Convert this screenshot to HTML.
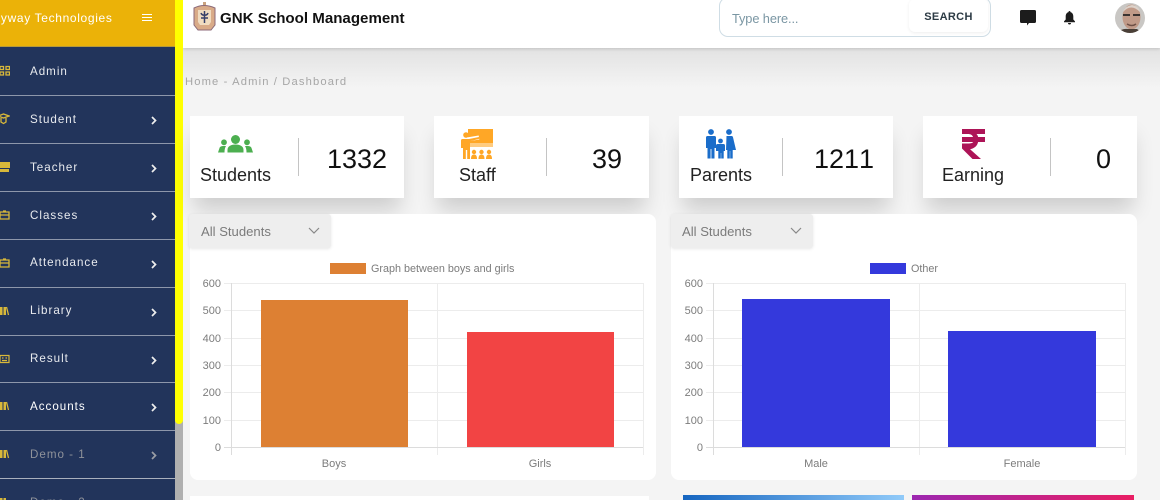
<!DOCTYPE html>
<html><head><meta charset="utf-8"><style>
*{box-sizing:border-box}
html,body{margin:0;padding:0;width:1160px;height:500px;overflow:hidden;background:#f4f4f4;font-family:"Liberation Sans",sans-serif}
.a{position:absolute}
#side{left:0;top:0;width:175px;height:500px;background:#22345b;overflow:hidden}
#top{left:0;top:0;width:175px;height:47px;background:#ebb208;border-bottom:1px solid #b69a3a}
.it{position:absolute;left:0;width:175px;height:48px;border-bottom:1px solid #8e97ab;color:#e8eaee;font-size:11.600px;letter-spacing:1px;overflow:hidden}
.it span{position:absolute;left:30px;top:17px;line-height:13px}
.it svg.c{position:absolute;left:151px;top:20px}
.it svg.i{position:absolute;left:-2px;top:17px}
.card{position:absolute;top:116px;height:82px;background:#fff;box-shadow:0 16px 20px -4px rgba(0,0,0,.16)}
.lab{position:absolute;font-size:18px;color:#222;line-height:22px;top:48px;white-space:nowrap}
.num{position:absolute;font-size:27px;color:#111;line-height:32px;top:27px;white-space:nowrap;font-kerning:none}
.dv{position:absolute;top:22px;width:1px;height:38px;background:#c4c4c4}
.pan{position:absolute;top:214px;width:466px;height:266px;background:#fff;border-radius:8px}
.dd{position:absolute;top:214px;width:142px;height:34px;background:#eee;border-radius:3px;box-shadow:0 1px 3px rgba(0,0,0,.1);color:#7b7b7b;font-size:13.100px;line-height:35px;padding-left:12px}
.dd svg{position:absolute;left:119px;top:13px}
</style></head><body>
<div class="a" style="left:183px;top:48px;width:977px;height:40px;background:linear-gradient(#e2e2e2,#f4f4f4)"></div>
<div class="a" style="left:183px;top:0;width:977px;height:48px;background:#fff;box-shadow:0 1px 3px rgba(0,0,0,.15)"></div>

<div id="side" class="a">
<div id="top" class="a"><div class="a" style="right:62.500px;top:11px;color:#fff;font-size:12px;letter-spacing:.65px;white-space:nowrap;line-height:14px">Skyway Technologies</div>
<svg class="a" style="left:142px;top:14px" width="10" height="8"><path d="M0 .5h10M0 3.500h10M0 6.500h10" stroke="#fff" stroke-width="1"/></svg></div>
<div class="it" style="top:48px"><svg class="i" width="12" height="12"><path d="M2 1.500h3.500v3H2zM8 1.500h3.500v3H8zM2 7h3.500v3H2zM8 7h3.500v3H8z" fill="none" stroke="#d8b83a" stroke-width="1.300"/></svg><span>Admin</span></div>
<div class="it" style="top:96px"><svg class="i" width="12" height="12"><path d="M0 3l5.500-2 5.500 2-5.500 2zM3 5v4l2.500 1.500L8 9V5" fill="none" stroke="#d8b83a" stroke-width="1.300"/></svg><span>Student</span><svg class="c" width="7" height="9"><path d="M1 1l3.500 3.500L1 8" fill="none" stroke="#eee" stroke-width="1.700"/></svg></div>
<div class="it" style="top:144px"><svg class="i" width="13" height="12"><path d="M2 1h10v6H2z M2 8h9v3H2z" fill="#d8b83a"/></svg><span>Teacher</span><svg class="c" width="7" height="9"><path d="M1 1l3.500 3.500L1 8" fill="none" stroke="#eee" stroke-width="1.700"/></svg></div>
<div class="it" style="top:192px"><svg class="i" width="12" height="12"><path d="M2 3h9v7H2zM2 6h9M5 2h3" fill="none" stroke="#d8b83a" stroke-width="1.300"/></svg><span>Classes</span><svg class="c" width="7" height="9"><path d="M1 1l3.500 3.500L1 8" fill="none" stroke="#eee" stroke-width="1.700"/></svg></div>
<div class="it" style="top:240px"><svg class="i" width="12" height="12"><path d="M2 3h9v7H2zM2 6h9M5 2h3" fill="none" stroke="#d8b83a" stroke-width="1.300"/></svg><span style="top:16px">Attendance</span><svg class="c" width="7" height="9"><path d="M1 1l3.500 3.500L1 8" fill="none" stroke="#eee" stroke-width="1.700"/></svg></div>
<div class="it" style="top:288px"><svg class="i" width="12" height="12"><path d="M2 2h2.500v8H2zM5.500 2H8v8H5.500z" fill="#d8b83a"/><path d="M8.500 2l2 8" stroke="#d8b83a" stroke-width="1.300"/></svg><span style="top:16px">Library</span><svg class="c" width="7" height="9"><path d="M1 1l3.500 3.500L1 8" fill="none" stroke="#eee" stroke-width="1.700"/></svg></div>
<div class="it" style="top:336px;height:47px"><svg class="i" width="12" height="12"><path d="M2 2.500h9v7H2zM4 7.500h5M4 5h1.500M7.500 5H9" fill="none" stroke="#d8b83a" stroke-width="1.200"/></svg><span style="top:16px">Result</span><svg class="c" width="7" height="9"><path d="M1 1l3.500 3.500L1 8" fill="none" stroke="#eee" stroke-width="1.700"/></svg></div>
<div class="it" style="top:383px"><svg class="i" width="12" height="12"><path d="M2 2h2.500v8H2zM5.500 2H8v8H5.500z" fill="#d8b83a"/><path d="M8.500 2l2 8" stroke="#d8b83a" stroke-width="1.300"/></svg><span style="color:#fff">Accounts</span><svg class="c" width="7" height="9"><path d="M1 1l3.500 3.500L1 8" fill="none" stroke="#eee" stroke-width="1.700"/></svg></div>
<div class="it" style="top:431px;border-bottom-color:#aab0bd"><svg class="i" width="12" height="12"><path d="M2 2h2.500v8H2zM5.500 2H8v8H5.500z" fill="#d8b83a"/><path d="M8.500 2l2 8" stroke="#d8b83a" stroke-width="1.300"/></svg><span style="color:#8f929a">Demo - 1</span><svg class="c" width="7" height="9"><path d="M1 1l3.500 3.500L1 8" fill="none" stroke="#9a9da5" stroke-width="1.700"/></svg></div>
<div class="it" style="top:479px;height:21px;border:0"><svg class="i" width="12" height="4"><path d="M2 2h2.500v8H2zM5.500 2H8v8H5.500z" fill="#d8b83a"/></svg><span style="color:#8f929a;height:4px;overflow:hidden">Demo - 2</span></div>
</div>
<div class="a" style="left:175px;top:0;width:8px;height:500px;background:#b0b0b0"></div>
<div class="a" style="left:175px;top:0;width:8px;height:424px;background:#ffff00;border-radius:0 0 4px 4px"></div>

<svg class="a" style="left:192px;top:1px" width="25" height="30" viewBox="0 0 25 30"><path d="M11 1h3v5h-3z" fill="#caa27e"/><path d="M2 7q10-5 21 0v17l-4 5H6l-4-5z" fill="#d9ab88" stroke="#8c6a78" stroke-width="1"/><path d="M6 9h13v12l-2 3H8l-2-3z" fill="#f0dcc0"/><path d="M12.500 10v12M9 12c1 3 6 3 7 0M9 17h7" stroke="#36406a" stroke-width="1.500" fill="none"/></svg>
<div class="a" style="left:220px;top:9.500px;font-size:15.100px;font-weight:bold;color:#111;line-height:17px;white-space:nowrap">GNK School Management</div>

<div class="a" style="left:719px;top:-3px;width:272px;height:40px;background:#fff;border:1px solid #cfdde5;border-radius:9px"></div>
<div class="a" style="left:732px;top:10px;font-size:12.800px;color:#7a96a3;line-height:17px;letter-spacing:-.1px">Type here...</div>
<div class="a" style="left:909px;top:-1px;width:79px;height:33px;background:#fff;border-radius:6px;box-shadow:0 1px 3px rgba(0,0,0,.07);text-align:center;font-size:11px;font-weight:bold;letter-spacing:.35px;color:#2c3a44;line-height:37px">SEARCH</div>
<svg class="a" style="left:1020px;top:10px" width="16" height="16"><path d="M1.500 0h13A1.500 1.500 0 0 1 16 1.500v10a1.500 1.500 0 0 1-1.500 1.500H9l-2 2.500V13H1.500A1.500 1.500 0 0 1 0 11.500v-10A1.500 1.500 0 0 1 1.500 0z" fill="#1c1c1c"/></svg>
<svg class="a" style="left:1064px;top:11px" width="11" height="14"><path d="M5.500 0c.7 0 1 .5 1 1.100C8.500 1.700 9.300 3.400 9.300 5.500v3L11 10.400v.8H0v-.8l1.700-1.900v-3c0-2.100.8-3.800 2.800-4.400C4.500.5 4.800 0 5.500 0zM4 12h3a1.500 1.500 0 0 1-3 0z" fill="#1c1c1c"/></svg>
<svg class="a" style="left:1115px;top:3px" width="30" height="30"><defs><clipPath id="av"><circle cx="15" cy="15" r="15"/></clipPath></defs><g clip-path="url(#av)"><rect width="30" height="30" fill="#c9c7c4"/><ellipse cx="16.500" cy="14" rx="9" ry="12.500" fill="#c09a88"/><path d="M8 9q8-9 17 0q-1-6-8-7q-7 1-9 7z" fill="#ddd3cb"/><path d="M8 12h7M18 12h7" stroke="#3a3331" stroke-width="2"/><path d="M12 21q5 3 9 0" stroke="#6d4f45" stroke-width="1.500" fill="none"/><path d="M2 30q5-5 11-4h9l5 4z" fill="#4a3f37"/></g></svg>

<div class="a" style="left:185px;top:76px;font-size:11.200px;letter-spacing:1.140px;color:#a6a6a6;line-height:13px;white-space:nowrap">Home - Admin / Dashboard</div>

<div class="card" style="left:190px;width:214px">
<svg class="a" style="left:28px;top:19px" width="36" height="19" viewBox="0 0 36 19"><g fill="#4caf50"><circle cx="17.500" cy="4.500" r="4.500"/><circle cx="6" cy="7.300" r="2.900"/><circle cx="29" cy="7.300" r="2.900"/><path d="M9.500 17.500v-2.500c0-3.500 3-5.500 8-5.500s8 2 8 5.500v2.500z"/><path d="M0 17.500l1.500-4.500c.5-1.500 2-2 4-2h2.500c-1 1.500-1.500 3.500-1.500 6.500zM35 17.500l-1.500-4.500c-.5-1.500-2-2-4-2H27c1 1.500 1.500 3.500 1.500 6.500z"/></g></svg>
<div class="lab" style="left:10px">Students</div><div class="dv" style="left:108px"></div><div class="num" style="left:137px">1332</div></div>

<div class="card" style="left:434px;width:215px">
<svg class="a" style="left:27px;top:13px" width="33" height="31" viewBox="0 0 33 31"><path d="M7 0h25v14H7z" fill="#ffa726"/><path d="M7 14h25v4H7z" fill="#ffcc80"/><path d="M6 10.500L18 8.500" stroke="#fff" stroke-width="4"/><g fill="#ffa726"><circle cx="5" cy="6" r="2.800"/><path d="M1.500 10H8l10-2 .4 1.700L9 12.300V30H6.200V21H4.800v9H2V19H0V11.500C0 10.500.6 10 1.500 10z"/><circle cx="13" cy="23" r="2.200"/><circle cx="20.500" cy="23" r="2.200"/><circle cx="28" cy="23" r="2.200"/><path d="M10 30c0-3 1-4.500 3-4.500s3 1.500 3 4.500zM17.500 30c0-3 1-4.500 3-4.500s3 1.500 3 4.500zM25 30c0-3 1-4.500 3-4.500s3 1.500 3 4.500z"/></g></svg>
<div class="lab" style="left:25px">Staff</div><div class="dv" style="left:112px"></div><div class="num" style="left:158px">39</div></div>

<div class="card" style="left:679px;width:214px">
<svg class="a" style="left:26px;top:13px" width="31" height="30" viewBox="0 0 31 30"><g fill="#1a6dca"><circle cx="6" cy="3" r="2.900"/><circle cx="24" cy="3" r="2.900"/><circle cx="15.500" cy="12" r="2.400"/><path d="M2.500 7h7c1 0 1.500.7 1.500 1.500V19H9.500v10.500H6.400V20H5.600v9.500H2.500V19H1V8.500C1 7.700 1.500 7 2.500 7z"/><path d="M12.500 15h6c.8 0 1.500.6 1.500 1.500V22h-1.300v7.500h-2.500V24h-.4v5.500h-2.500V22H11v-5.500c0-.9.700-1.500 1.500-1.500z"/><path d="M21.500 7h5c.8 0 1.200.4 1.500 1.200L31 21h-3.300v8.500h-2.500V22h-.4v7.500h-2.500V21H21z"/></g></svg>
<div class="lab" style="left:11px">Parents</div><div class="dv" style="left:103px"></div><div class="num" style="left:135px">1211</div></div>

<div class="card" style="left:923px;width:214px">
<svg class="a" style="left:39px;top:13px" width="23" height="30" viewBox="0 0 23 30"><path d="M0 0h23v5h-8.500c.8.8 1.300 1.500 1.600 3H23v5h-6.900c-.8 4-4 6.500-8 7.200L19 30h-8.500L0 19.500v-5h6c3 0 4.500-.5 5.200-1.500H0V8h11C10.500 6 8.500 5 6 5H0z" fill="#ad1457"/></svg>
<div class="lab" style="left:19px">Earning</div><div class="dv" style="left:127px"></div><div class="num" style="left:173px">0</div></div>

<div class="pan" style="left:190px"></div>
<div class="pan" style="left:671px"></div>
<div class="dd" style="left:189px">All Students<svg width="12" height="8"><path d="M1 1l5 5 5-5" fill="none" stroke="#888" stroke-width="1.200"/></svg></div>
<div class="dd" style="left:671px;padding-left:11px">All Students<svg width="12" height="8"><path d="M1 1l5 5 5-5" fill="none" stroke="#888" stroke-width="1.200"/></svg></div>

<svg class="a" style="left:0;top:0" width="1160" height="500" font-family="Liberation Sans" font-size="10.800" fill="#7c7c7c">
<g stroke="#ececec" stroke-width="1" shape-rendering="crispEdges">
<path d="M224 283.500H643M224 310.500H643M224 338.500H643M224 365.500H643M224 392.500H643M224 420.500H643M437.500 283V455M643.500 283V455"/>
<path d="M706 283.500H1125M706 310.500H1125M706 338.500H1125M706 365.500H1125M706 392.500H1125M706 420.500H1125M919.500 283V455M1125.500 283V455"/>
</g>
<g stroke="#dcdcdc" stroke-width="1" shape-rendering="crispEdges">
<path d="M224 447.500H643M231.500 283V455M706 447.500H1125M713.500 283V455"/>
</g>
<rect x="261" y="300" width="147" height="147" fill="#dd8033"/>
<rect x="467" y="332" width="147" height="115" fill="#f24444"/>
<rect x="742" y="299" width="148" height="148" fill="#3439dc"/>
<rect x="948" y="331" width="148" height="116" fill="#3439dc"/>
<rect x="330" y="263" width="36" height="11" fill="#dd8033"/>
<rect x="870" y="263" width="36" height="11" fill="#3439dc"/>
<text x="371" y="272">Graph between boys and girls</text>
<text x="911" y="272">Other</text>
<g text-anchor="end" font-size="11">
<text x="221" y="287">600</text><text x="221" y="314">500</text><text x="221" y="342">400</text><text x="221" y="369">300</text><text x="221" y="396">200</text><text x="221" y="424">100</text><text x="221" y="451">0</text>
<text x="703" y="287">600</text><text x="703" y="314">500</text><text x="703" y="342">400</text><text x="703" y="369">300</text><text x="703" y="396">200</text><text x="703" y="424">100</text><text x="703" y="451">0</text>
</g>
<g text-anchor="middle" font-size="11">
<text x="334" y="467">Boys</text><text x="540" y="467">Girls</text><text x="816" y="467">Male</text><text x="1022" y="467">Female</text>
</g>
</svg>

<div class="a" style="left:190px;top:496px;width:459px;height:4px;background:#fff"></div>
<div class="a" style="left:683px;top:495px;width:221px;height:5px;background:linear-gradient(90deg,#1565c0,#90caf9)"></div>
<div class="a" style="left:912px;top:495px;width:222px;height:5px;background:linear-gradient(90deg,#9c27b0,#e91e63)"></div>
</body></html>
